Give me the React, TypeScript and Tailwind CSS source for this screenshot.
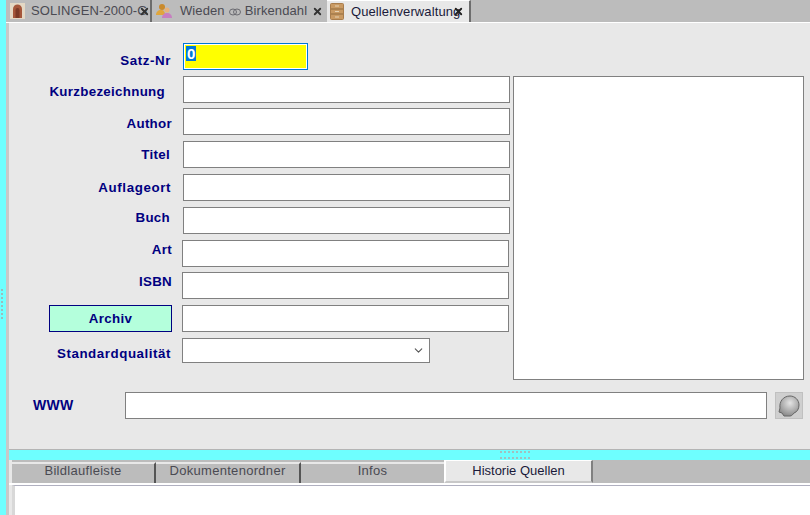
import React from 'react';
import { ChevronDown, X } from 'lucide-react';

const rows = [
  { label: 'Kurzbezeichnung', labelClass: 'pr-[18px] translate-y-[2px]', rowClass: '' },
  { label: 'Author', labelClass: 'pr-[11px] translate-y-[2px]', rowClass: 'mt-[5px]' },
  { label: 'Titel', labelClass: 'pr-[13px]', rowClass: 'mt-[6px]' },
  { label: 'Auflageort', labelClass: 'pr-[12px] tracking-[0.6px]', rowClass: 'mt-[6px]' },
  { label: 'Buch', labelClass: 'pr-[13px] -translate-y-[3px]', rowClass: 'mt-[6px]' },
  { label: 'Art', labelClass: 'pr-[11px] -translate-y-[4px]', rowClass: 'mt-[6px]' },
  { label: 'ISBN', labelClass: 'pr-[11px] -translate-y-[4px]', rowClass: 'mt-[5px]' },
];

const DrawerIcon = () => (
  <svg width="14" height="17" viewBox="0 0 14 17" className="shrink-0">
    <rect x="0.5" y="0.5" width="13" height="16" rx="1" fill="#c99a63" stroke="#a97d4c" />
    <path d="M1 6h12M1 11h12" stroke="#8f6a3f" />
    <path d="M5 3h4M5 8.5h4M5 14h4" stroke="#e6d3b5" />
  </svg>
);

const PortalIcon = () => (
  <svg width="15" height="16" viewBox="0 0 15 16" className="shrink-0">
    <rect x="0" y="0" width="15" height="16" fill="#e4d8c4" />
    <path d="M3 15V6a4.5 4.5 0 0 1 9 0v9z" fill="#a5563a" />
    <path d="M5.5 15V7a2 2 0 0 1 4 0v8z" fill="#7c3a26" />
  </svg>
);

const PeopleIcon = () => (
  <svg width="17" height="16" viewBox="0 0 17 16" className="shrink-0">
    <circle cx="7" cy="4" r="3" fill="#c98a2c" />
    <path d="M1 12c0-3 2-5 5-5s4 2 4 5z" fill="#e0a63c" />
    <circle cx="12" cy="7" r="2.5" fill="#e8b27a" />
    <path d="M7 15c0-3 2-5 5-5s5 2 5 5z" fill="#c77fc0" />
  </svg>
);

const RingsIcon = () => (
  <svg width="12" height="8" viewBox="0 0 12 8" className="mx-[4px] mt-[1px] shrink-0" fill="none" stroke="#6a6a70">
    <ellipse cx="4" cy="4" rx="3.5" ry="3" />
    <ellipse cx="8" cy="4" rx="3.5" ry="3" />
  </svg>
);

const SkullIcon = () => (
  <svg width="22" height="22" viewBox="0 0 22 22" className="shrink-0">
    <defs>
      <radialGradient id="skull" cx="0.55" cy="0.35" r="0.7">
        <stop offset="0" stopColor="#e4e4e4" />
        <stop offset="1" stopColor="#858585" />
      </radialGradient>
    </defs>
    <path
      d="M12 1c5 0 9 4 9 9 0 4-2 7-5 8-1 1-2 3-4 3H6l-2-3-3-1 1-4C1 7 5 1 12 1z"
      fill="url(#skull)"
      stroke="#666666"
    />
  </svg>
);

function FormInput({ className }: { className: string }) {
  return <div className={`h-[27px] border border-[#808080] bg-white ${className}`} />;
}

export default function App() {
  return (
    <div className="flex h-[515px] w-[810px] overflow-hidden bg-[#e8e8e8] font-['Liberation_Sans',Arial,sans-serif]">
      {/* Left splitter */}
      <div className="relative w-[6px] shrink-0 bg-[#6effff]">
        <div className="absolute left-[1px] top-[289px] h-[30px] border-l-2 border-dotted border-[#9cbcbc]" />
      </div>
      <div className="flex min-w-0 flex-1 flex-col">
        {/* Top tabs */}
        <div className="flex h-[23px] shrink-0 items-stretch border-b border-white bg-[#bcbcbc] pl-[3px] text-[13px] tracking-[0.1px]">
          <div className="flex w-[143px] items-center border-r-2 border-[#6d6d6d] pl-[1px] text-[#4a4a52]">
            <PortalIcon />
            <span className="ml-[6px] whitespace-nowrap">SOLINGEN-2000-G</span>
            <X size={11} strokeWidth={4} className="-ml-[8px] shrink-0 text-[#333333]" />
          </div>
          <div className="ml-[1px] flex w-[174px] items-center pl-[2px] text-[#4a4a52]">
            <PeopleIcon />
            <span className="ml-[8px] flex items-center whitespace-nowrap">
              Wieden
              <RingsIcon />
              Birkendahl
            </span>
            <X size={11} strokeWidth={4} className="ml-[5px] shrink-0 text-[#333333]" />
          </div>
          <div className="flex w-[144px] items-center border-r-2 border-t border-r-[#6d6d6d] border-t-white bg-[#e8e8e8] pl-[3px] text-[#1a1a3a]">
            <DrawerIcon />
            <span className="ml-[7px] whitespace-nowrap">Quellenverwaltung</span>
            <X size={11} strokeWidth={4} className="-ml-[7px] shrink-0 text-[#222222]" />
          </div>
        </div>

        {/* Form panel */}
        <div className="flex min-h-0 flex-1 flex-col border-l-[3px] border-[#c8c8c8] text-[13.33px] font-bold tracking-[0.3px] text-[#000080]">
          <div className="flex h-[427px] shrink-0 flex-col border-b border-[#b4b4b4] pt-[20px]">
            <div className="flex items-start">
              <div className="h-[33px] w-[174px] shrink-0 pr-[12px] pt-[8px] text-right tracking-[0.6px]">Satz-Nr</div>
              <div className="h-[27px] w-[125px] border border-[#0078d7] bg-[#ffff00] pl-[1px] pt-[1px] shadow-[inset_0_0_0_1px_#ffffff]">
                <span className="ml-[1px] inline-block h-[15px] bg-[#0078d7] px-[1px] text-[15px] leading-[15px] tracking-normal text-white">0</span>
              </div>
            </div>

            <div className="flex">
              <div className="flex w-[501px] shrink-0 flex-col">
                {rows.map((row) => (
                  <div key={row.label} className={`flex items-center ${row.rowClass}`}>
                    <div className={`w-[174px] shrink-0 text-right ${row.labelClass}`}>{row.label}</div>
                    {row.label === 'Art' || row.label === 'ISBN' ? (
                      <FormInput className="-ml-px w-[327px]" />
                    ) : (
                      <FormInput className="w-[327px]" />
                    )}
                  </div>
                ))}
                <div className="mt-[6px] flex items-center">
                  <div className="ml-[40px] mr-[10px] h-[27px] w-[123px] shrink-0 border border-[#000080] bg-[#b4ffdc] text-center leading-[25px]">
                    Archiv
                  </div>
                  <FormInput className="w-[327px]" />
                </div>
                <div className="mt-[6px] flex items-center">
                  <div className="w-[174px] shrink-0 translate-y-[3px] pr-[12px] text-right tracking-[0.55px]">Standardqualität</div>
                  <div className="-ml-px flex h-[25px] w-[248px] items-center justify-end border border-[#808080] bg-white pr-[4px]">
                    <ChevronDown size={13} className="text-[#555555]" />
                  </div>
                </div>
              </div>
              <div className="ml-[3px] h-[304px] w-[291px] border border-[#808080] bg-white" />
            </div>

            <div className="mt-[12px] flex items-center">
              <div className="w-[116px] shrink-0 pl-[24px] text-[14px]">WWW</div>
              <div className="h-[27px] w-[642px] border border-[#808080] bg-white" />
              <div className="ml-[8px] flex h-[27px] w-[28px] items-center justify-center border border-[#c0c0c0] bg-[#cfcfcf]">
                <SkullIcon />
              </div>
            </div>
          </div>

          {/* Horizontal splitter */}
          <div className="relative h-[10px] shrink-0 bg-[#6effff]">
            <div className="absolute left-[491px] top-[1px] h-[8px] w-[30px] border-y-2 border-dotted border-[#a0c0c0]" />
          </div>

          {/* Bottom tabs */}
          <div className="ml-[3px] flex h-[23px] shrink-0 bg-[#bcbcbc] text-[13px] font-normal tracking-[0.3px] text-[#4a4a52]">
            <div className="mt-[2px] w-[144px] border-r-2 border-t-2 border-r-[#555555] border-t-[#e8e8e8] text-center leading-[14px]">Bildlaufleiste</div>
            <div className="mt-[2px] w-[145px] border-r-2 border-t-2 border-r-[#555555] border-t-[#e8e8e8] text-center leading-[14px]">Dokumentenordner</div>
            <div className="mt-[2px] w-[143px] border-t-2 border-t-[#e8e8e8] text-center leading-[14px]">Infos</div>
            <div className="h-[23px] w-[149px] border-x-2 border-t border-b-2 border-l-white border-r-[#808080] border-t-white border-b-[#c8c8c8] bg-[#e8e8e8] text-center leading-[20px] tracking-normal text-[#1a1a3a]">Historie Quellen</div>
          </div>

          <div className="h-[2px] shrink-0 bg-white" />
          <div className="ml-[3px] min-h-0 flex-1 border-l-[3px] border-t border-[#d8d8d8] border-t-[#b0b0c0] bg-white" />
        </div>
      </div>
    </div>
  );
}
